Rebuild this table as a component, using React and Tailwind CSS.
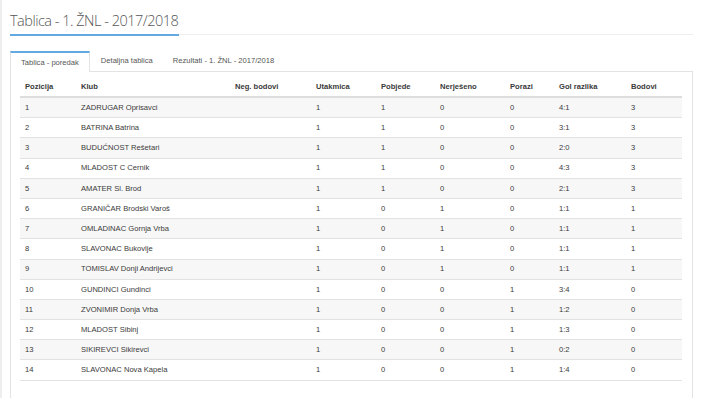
const cols = ["Pozicija", "Klub", "Neg. bodovi", "Utakmica", "Pobjede", "Nerješeno", "Porazi", "Gol razlika", "Bodovi"];

const rows = [
  ["1", "ZADRUGAR Oprisavci", "", "1", "1", "0", "0", "4:1", "3"],
  ["2", "BATRINA Batrina", "", "1", "1", "0", "0", "3:1", "3"],
  ["3", "BUDUĆNOST Rešetari", "", "1", "1", "0", "0", "2:0", "3"],
  ["4", "MLADOST C Cernik", "", "1", "1", "0", "0", "4:3", "3"],
  ["5", "AMATER Sl. Brod", "", "1", "1", "0", "0", "2:1", "3"],
  ["6", "GRANIČAR Brodski Varoš", "", "1", "0", "1", "0", "1:1", "1"],
  ["7", "OMLADINAC Gornja Vrba", "", "1", "0", "1", "0", "1:1", "1"],
  ["8", "SLAVONAC Bukovlje", "", "1", "0", "1", "0", "1:1", "1"],
  ["9", "TOMISLAV Donji Andrijevci", "", "1", "0", "1", "0", "1:1", "1"],
  ["10", "GUNDINCI Gundinci", "", "1", "0", "0", "1", "3:4", "0"],
  ["11", "ZVONIMIR Donja Vrba", "", "1", "0", "0", "1", "1:2", "0"],
  ["12", "MLADOST Sibinj", "", "1", "0", "0", "1", "1:3", "0"],
  ["13", "SIKIREVCI Sikirevci", "", "1", "0", "0", "1", "0:2", "0"],
  ["14", "SLAVONAC Nova Kapela", "", "1", "0", "0", "1", "1:4", "0"],
];

const grid = "grid grid-cols-[56px_154px_81px_65px_59px_70px_49px_72px_56px]";

export default function App() {
  return (
    <div className="w-[702px] h-[398px] overflow-hidden bg-white border-l-[2px] border-[#eeeeee] font-['Liberation_Sans',Arial,sans-serif]">
      <div className="pl-[8px] pr-[9px]">
        {/* heading */}
        <div className="pt-[10px] flex flex-col">
          <h1 className="font-['Open_Sans',sans-serif] font-light text-[14.5px] tracking-[-0.5px] leading-[22px] text-[#555] w-max">
            Tablica - 1. ŽNL - 2017/2018
          </h1>
          <div className="flex mt-[2px]">
            <div className="w-[169px] h-[2px] bg-[#63a9e0]" />
            <div className="flex-1 h-[1px] bg-[#eeeeee]" />
          </div>
        </div>

        {/* tabs */}
        <div className="mt-[15px] flex items-end text-[7.6px] text-[#555]">
          <div className="h-[21px] flex items-center px-[10px] border-t-2 border-t-[#63a9e0] border-x border-x-[#e3e3e3] bg-white">
            Tablica - poredak
          </div>
          <div className="flex-1 flex items-end border-b border-[#e3e3e3]">
            <div className="h-[20px] flex items-center px-[10px] ml-[1px]">Detaljna tablica</div>
            <div className="h-[20px] flex items-center px-[10px]">Rezultati - 1. ŽNL - 2017/2018</div>
          </div>
        </div>

        {/* panel */}
        <div className="border-x border-[#e3e3e3] h-[330px] pt-[6px] pl-[9px]">
          <div className="w-[662px] text-[7.6px] text-[#3a3a3a]">
            <div className={`${grid} h-[20px] items-center font-bold border-b-2 border-[#dddddd]`}>
              {cols.map((c) => (
                <div key={c} className="pl-[5px]">{c}</div>
              ))}
            </div>
            {rows.map((r, i) => (
              <div
                key={r[0]}
                className={`${grid} h-[20.2px] items-center border-b border-[#e2e2e2] ${i % 2 === 0 ? "bg-[#f7f7f7]" : "bg-white"}`}
              >
                {r.map((v, j) => (
                  <div key={j} className="pl-[5px]">{v}</div>
                ))}
              </div>
            ))}
          </div>
        </div>
      </div>
    </div>
  );
}
